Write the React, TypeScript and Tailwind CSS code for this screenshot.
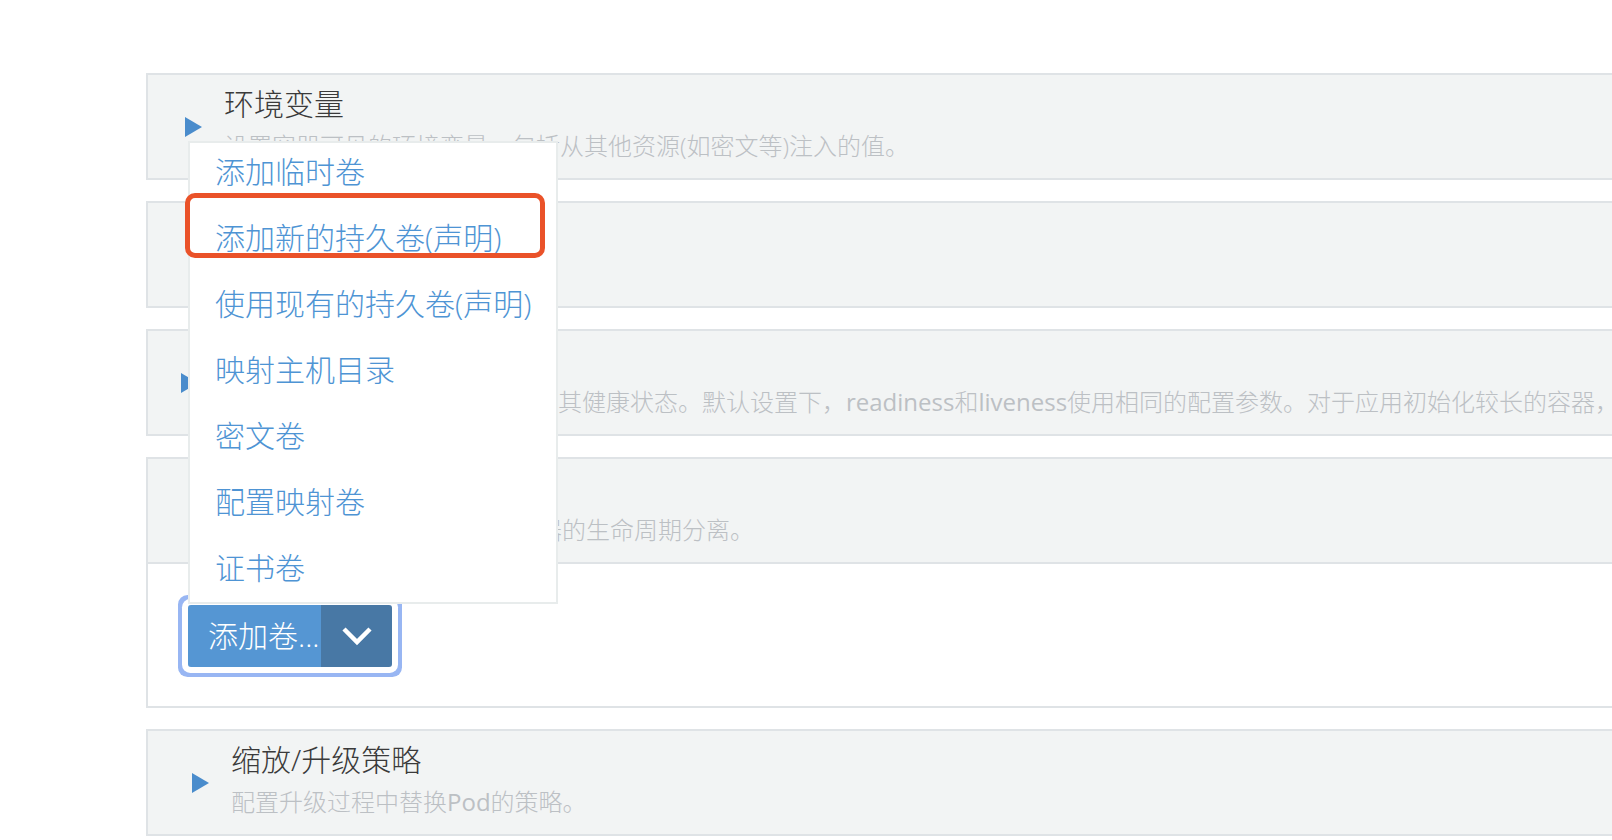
import React from "react";

function Tri({ down }: { down?: boolean }) {
  return down ? (
    <svg width="20" height="17" viewBox="0 0 20 17">
      <polygon points="0,0 20,0 10,17" fill="#4a8ccc" />
    </svg>
  ) : (
    <svg width="17" height="20" viewBox="0 0 17 20">
      <polygon points="0,0 17,10 0,20" fill="#4a8ccc" />
    </svg>
  );
}

function Panel({
  title,
  desc,
  pad,
  gap,
  down,
}: {
  title: React.ReactNode;
  desc: React.ReactNode;
  pad: string;
  gap: string;
  down?: boolean;
}) {
  return (
    <div
      className={`h-[107px] border-2 border-r-0 border-[#dfe3e6] bg-[#f2f4f4] flex items-center overflow-hidden ${pad}`}
    >
      <div className="shrink-0 flex">
        <Tri down={down} />
      </div>
      <div className={`flex flex-col whitespace-nowrap pb-[4px] ${gap}`}>
        <div className="text-[30px] leading-[42px] text-[#3a3a3a]">{title}</div>
        <div className="text-[24px] leading-[42px] text-[#bcc0c4]">{desc}</div>
      </div>
    </div>
  );
}

const items = [
  "添加临时卷",
  "添加新的持久卷(声明)",
  "使用现有的持久卷(声明)",
  "映射主机目录",
  "密文卷",
  "配置映射卷",
  "证书卷",
];

const N = ({ children }: { children: React.ReactNode }) => (
  <span className="font-normal">{children}</span>
);

export default function App() {
  return (
    <div className="relative w-full h-[840px] overflow-hidden bg-white font-light font-[family-name:'Open_Sans','Noto_Sans_CJK_SC',sans-serif]">
      <div className="pt-[73px] pl-[146px] flex flex-col gap-[21px]">
        <Panel
          title="环境变量"
          desc="设置容器可见的环境变量，包括从其他资源(如密文等)注入的值。"
          pad="pl-[37px]"
          gap="ml-[22px]"
        />
        <Panel
          title="节点调度"
          desc={
            <>
              选择<N>Pod</N>调度的节点。
            </>
          }
          pad="pl-[42px]"
          gap="ml-[17px]"
        />
        <Panel
          title="健康检查"
          desc={
            <>
              定期检查容器内的应用，以确定其健康状态。默认设置下，<N>readiness</N>和<N>liveness</N>
              使用相同的配置参数。对于应用初始化较长的容器，可以设置初始延迟时间。
            </>
          }
          pad="pl-[33px]"
          gap="ml-[24px]"
        />
        <div className="flex flex-col">
          <Panel
            title="数据卷"
            desc="持久化存储数据，使数据与容器的生命周期分离。"
            pad="pl-[41px]"
            gap="ml-[17px]"
            down
          />
          <div className="border-2 border-t-0 border-r-0 border-[#dfe3e6] bg-white pl-[40px] pt-[41px] pb-[39px]">
            <div className="inline-flex h-[62px] rounded-[3px] overflow-hidden ring-4 ring-[#98b6f3] ring-offset-[6px] ring-offset-white">
              <div className="w-[133px] bg-[#5596d3] text-white text-[30px] leading-none pl-[20px] flex items-center whitespace-nowrap">
                添加卷...
              </div>
              <div className="w-[71px] bg-[#4878a5] flex items-center justify-center">
                <svg width="30" height="20" viewBox="0 0 30 20">
                  <polyline
                    points="2,3 15,16 28,3"
                    fill="none"
                    stroke="#ffffff"
                    strokeWidth="4.5"
                  />
                </svg>
              </div>
            </div>
          </div>
        </div>
        <Panel
          title="缩放/升级策略"
          desc={
            <>
              配置升级过程中替换<N>Pod</N>的策略。
            </>
          }
          pad="pl-[44px]"
          gap="ml-[22px]"
        />
      </div>

      <div className="absolute left-[188px] top-[141px] w-[370px] h-[463px] bg-white border-2 border-[#e8ecec]">
        <ul className="-mt-[4px]">
          {items.map((t) => (
            <li
              key={t}
              className="h-[66px] leading-[66px] pl-[25px] text-[30px] text-[#4e94d4] whitespace-nowrap"
            >
              {t}
            </li>
          ))}
        </ul>
      </div>

      <div className="absolute left-[185px] top-[193px] w-[360px] h-[65px] border-[5px] border-[#ea5229] rounded-[10px]" />
    </div>
  );
}
